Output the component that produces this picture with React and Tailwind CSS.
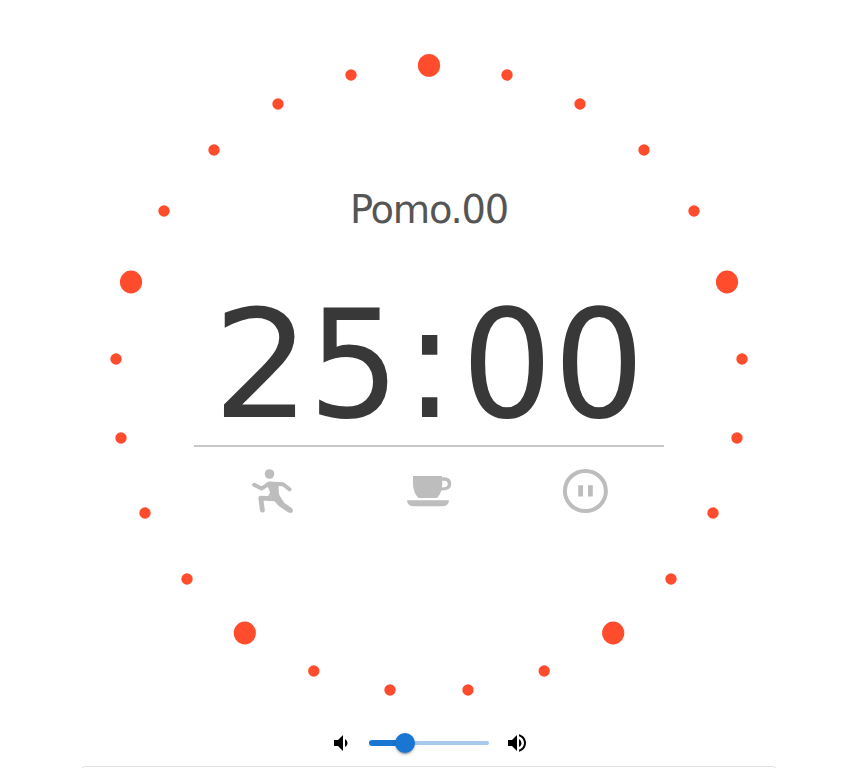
import { MdVolumeDown, MdVolumeUp } from 'react-icons/md';

// Right half of the dial, clockwise from the top; the left half mirrors it.
const WIDTH = 858;
const TOP = { x: 429, y: 65.4, big: true };
const RIGHT_SIDE = [
  { x: 507, y: 75 },
  { x: 580, y: 104 },
  { x: 644, y: 150 },
  { x: 694, y: 211 },
  { x: 727, y: 282, big: true },
  { x: 742, y: 359 },
  { x: 737, y: 438 },
  { x: 713, y: 513 },
  { x: 671, y: 579 },
  { x: 613.2, y: 633, big: true },
  { x: 544.2, y: 671 },
  { x: 468, y: 690 },
];

function Dial() {
  const dots = [TOP, ...RIGHT_SIDE, ...RIGHT_SIDE.map((d) => ({ ...d, x: WIDTH - d.x }))];
  return (
    <svg className="absolute inset-0" width="858" height="720" fill="#ff4c2d" aria-hidden="true">
      {dots.map((d, i) =>
        d.big ? (
          <ellipse key={i} cx={d.x} cy={d.y} rx="11.1" ry="11.4" />
        ) : (
          <ellipse key={i} cx={d.x} cy={d.y} rx="5.7" ry="5.8" />
        )
      )}
    </svg>
  );
}

function WorkIcon() {
  return (
    <svg width="48" height="48" viewBox="0 0 48 48" fill="#bdbdbd" className="-translate-x-[3px]">
      <circle cx="24.5" cy="7" r="4.8" />
      <path
        d="M9.2 17.8L16.5 21.6L24 16.6L38 17.2L44.5 22.3"
        fill="none"
        stroke="#bdbdbd"
        strokeWidth="4"
        strokeLinecap="round"
        strokeLinejoin="round"
      />
      <path d="M21.5 15.5L34.5 15.5Q32.6 20.5 34.5 28.5L39.5 36L47 41.3Q49 43.5 46.8 46.1L43.5 45.6L33.5 38.7L28.3 33L23 34.2Q22 30 24.8 26Q24.8 22 21 18Z" />
      <path
        d="M28 31.6L15.8 31.2L17.4 43.2"
        fill="none"
        stroke="#bdbdbd"
        strokeWidth="4.8"
        strokeLinecap="round"
        strokeLinejoin="round"
      />
    </svg>
  );
}

function CupIcon() {
  return (
    <svg width="48" height="48" viewBox="0 0 48 48" fill="#bdbdbd">
      <path d="M8 9H37V10.4Q46.3 9.3 46.3 17Q46.3 23.8 36.3 23.5Q35.5 27.5 32 31H13.5Q8 25.5 8 17ZM37.2 13.8Q37.5 16.8 36.8 20.6Q42.8 20.6 42.8 17Q42.8 13 37.2 13.8Z" fillRule="evenodd" />
      <path d="M2 33.2H44Q43.5 39.3 37 39.3H9Q2.5 39.3 2 33.2Z" />
    </svg>
  );
}

function PauseIcon() {
  return (
    <svg width="48" height="48" viewBox="0 0 48 48" fill="#bdbdbd">
      <ellipse cx="23.4" cy="24" rx="20.5" ry="20.1" fill="none" stroke="#bdbdbd" strokeWidth="4" />
      <path d="M16.2 18.2H21V29.5H16.2ZM26 18.2H30.8V29.5H26Z" />
    </svg>
  );
}

export default function App() {
  return (
    <div className="flex h-[768px] w-[858px] flex-col overflow-hidden bg-white font-['DejaVu_Sans',sans-serif]">
      <main className="relative h-[731px] shrink-0">
        <Dial />
        <div className="relative mx-auto flex w-[470px] flex-col items-center pt-[187px]">
          <h1 className="h-[45px] text-[38.4px] leading-[45px] tracking-[-1.2px] whitespace-nowrap text-[#555]">Pomo.00</h1>
          <div className="mt-[41px] flex h-[172px] pt-[3px] text-[149px] leading-[180px] text-[#383838]">
            <span className="flex w-[92px] translate-x-[1.5px] scale-x-[1.03] justify-center">2</span>
            <span className="flex w-[92px] translate-x-[2px] scale-x-[0.97] justify-center">5</span>
            <span className="flex h-[144px] w-[62px] origin-bottom translate-x-[0.5px] scale-y-[1.06] justify-center">:</span>
            <span className="flex w-[92px] translate-x-px scale-x-[0.96] justify-center">0</span>
            <span className="flex w-[92px] translate-x-px scale-x-[0.96] justify-center">0</span>
          </div>
          <div className="h-0.5 w-full bg-[#c8c8c8]" />
          <div className="flex w-full justify-around pt-5">
            <button aria-label="Work"><WorkIcon /></button>
            <button aria-label="Break"><CupIcon /></button>
            <button aria-label="Pause"><PauseIcon /></button>
          </div>
        </div>
      </main>
      <div className="flex h-6 shrink-0 items-center justify-center gap-4">
        <MdVolumeDown size={24} />
        <div className="grid w-[120px] items-center">
          <div className="col-start-1 row-start-1 h-1 rounded-full bg-[#a8c9ee]" />
          <div className="col-start-1 row-start-1 flex items-center">
            <div className="h-1.5 w-9 rounded-full bg-[#1976d2]" />
            <div className="-ml-2.5 size-5 rounded-full bg-[#1976d2] shadow-[0_3px_1px_-2px_rgba(0,0,0,0.2),0_2px_2px_0_rgba(0,0,0,0.14),0_1px_5px_0_rgba(0,0,0,0.12)]" />
          </div>
        </div>
        <MdVolumeUp size={24} />
      </div>
      <div className="mx-auto mt-[11px] h-10 w-[696px] shrink-0 rounded border border-[#e0e0e0]" />
    </div>
  );
}
